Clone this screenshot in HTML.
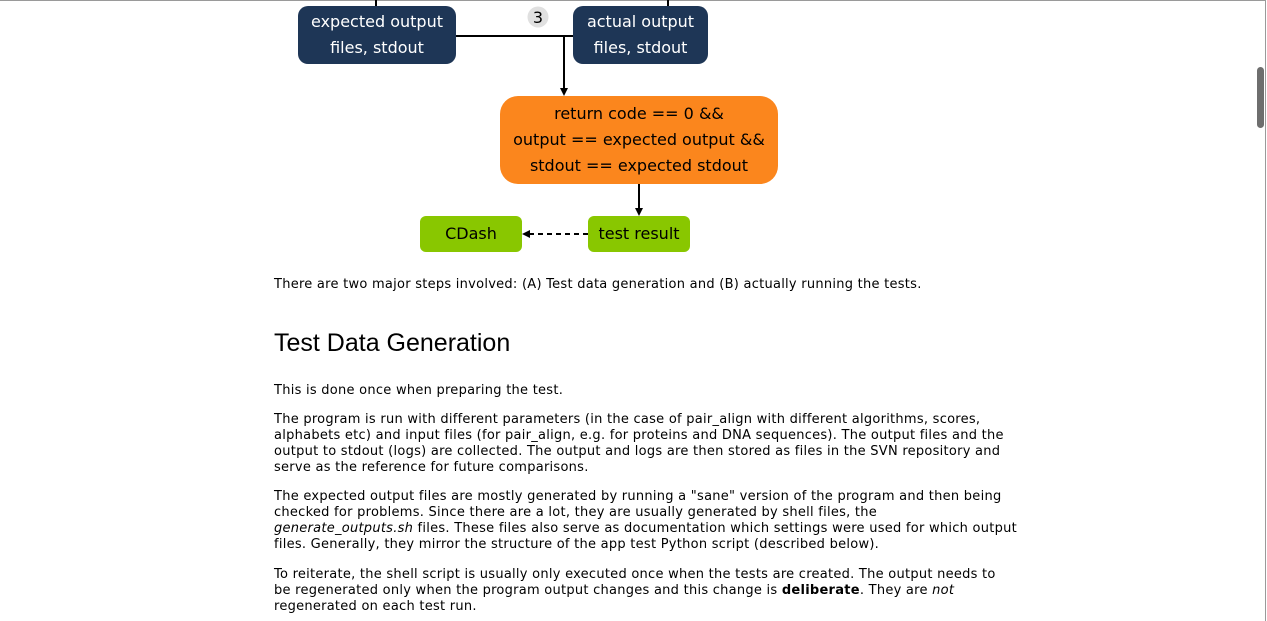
<!DOCTYPE html>
<html><head><meta charset="utf-8"><style>
body{margin:0;width:1267px;height:621px;overflow:hidden;background:#fff;position:relative;font-family:"DejaVu Sans","Liberation Sans",sans-serif;}
.frame{position:absolute;left:0;top:0;width:1266px;height:621px;border-top:1px solid #9a9a9a;border-right:1px solid #9a9a9a;box-sizing:border-box;}
.thumb{position:absolute;left:1257px;top:67px;width:7px;height:61px;background:#6e6e6e;border-radius:4px;}
.p{position:absolute;left:274px;font-size:13px;line-height:16px;color:#000;white-space:nowrap;letter-spacing:0.26px;}
h1{position:absolute;left:274px;top:329px;margin:0;font:normal 25px "Liberation Sans",sans-serif;color:#000;}
.box{position:absolute;display:flex;align-items:center;justify-content:center;text-align:center;font-family:"DejaVu Sans","Liberation Sans",sans-serif;font-size:16px;line-height:26px;}
.dark{background:#1e3656;color:#fff;border-radius:10px;}
.or{background:#fb861d;color:#000;border-radius:18px;}
.gr{background:#89c700;color:#000;border-radius:6px;}
</style></head><body>
<div class="frame"></div>
<div class="thumb"></div>
<svg style="position:absolute;left:0;top:0" width="1267" height="621">
<line x1="376" y1="0" x2="376" y2="7" stroke="#000" stroke-width="2"/>
<line x1="668" y1="0" x2="668" y2="7" stroke="#000" stroke-width="2"/>
<line x1="456" y1="36" x2="580" y2="36" stroke="#000" stroke-width="2"/>
<line x1="564" y1="36" x2="564" y2="92" stroke="#000" stroke-width="2"/>
<path d="M560 88 L564 96 L568 88Z" fill="#000"/>
<line x1="639" y1="184" x2="639" y2="212" stroke="#000" stroke-width="2"/>
<path d="M635 208 L639 216 L643 208Z" fill="#000"/>
<line x1="588" y1="234" x2="527" y2="234" stroke="#000" stroke-width="2" stroke-dasharray="5,4"/>
<path d="M530 230 L522 234 L530 238Z" fill="#000"/>
<circle cx="538" cy="17" r="10.5" fill="#e0e0e0"/>
<text x="538" y="23" text-anchor="middle" font-family="DejaVu Sans,sans-serif" font-size="16" fill="#000">3</text>
</svg>
<div class="box dark" style="left:298px;top:6px;width:158px;height:58px">expected output<br>files, stdout</div>
<div class="box dark" style="left:573px;top:6px;width:135px;height:58px">actual output<br>files, stdout</div>
<div class="box or" style="left:500px;top:96px;width:278px;height:88px">return code == 0 &amp;&amp;<br>output == expected output &amp;&amp;<br>stdout == expected stdout</div>
<div class="box gr" style="left:420px;top:216px;width:102px;height:36px">CDash</div>
<div class="box gr" style="left:588px;top:216px;width:102px;height:36px">test result</div>

<div class="p" style="top:277px">There are two major steps involved: (A) Test data generation and (B) actually running the tests.</div>
<h1>Test Data Generation</h1>
<div class="p" style="top:383px">This is done once when preparing the test.</div>
<div class="p" style="top:412px">The program is run with different parameters (in the case of pair_align with different algorithms, scores,<br>alphabets etc) and input files (for pair_align, e.g. for proteins and DNA sequences). The output files and the<br>output to stdout (logs) are collected. The output and logs are then stored as files in the SVN repository and<br>serve as the reference for future comparisons.</div>
<div class="p" style="top:489px">The expected output files are mostly generated by running a "sane" version of the program and then being<br>checked for problems. Since there are a lot, they are usually generated by shell files, the<br><i>generate_outputs.sh</i> files. These files also serve as documentation which settings were used for which output<br>files. Generally, they mirror the structure of the app test Python script (described below).</div>
<div class="p" style="top:567px">To reiterate, the shell script is usually only executed once when the tests are created. The output needs to<br>be regenerated only when the program output changes and this change is <b>deliberate</b>. They are <i>not</i><br>regenerated on each test run.</div>
</body></html>
